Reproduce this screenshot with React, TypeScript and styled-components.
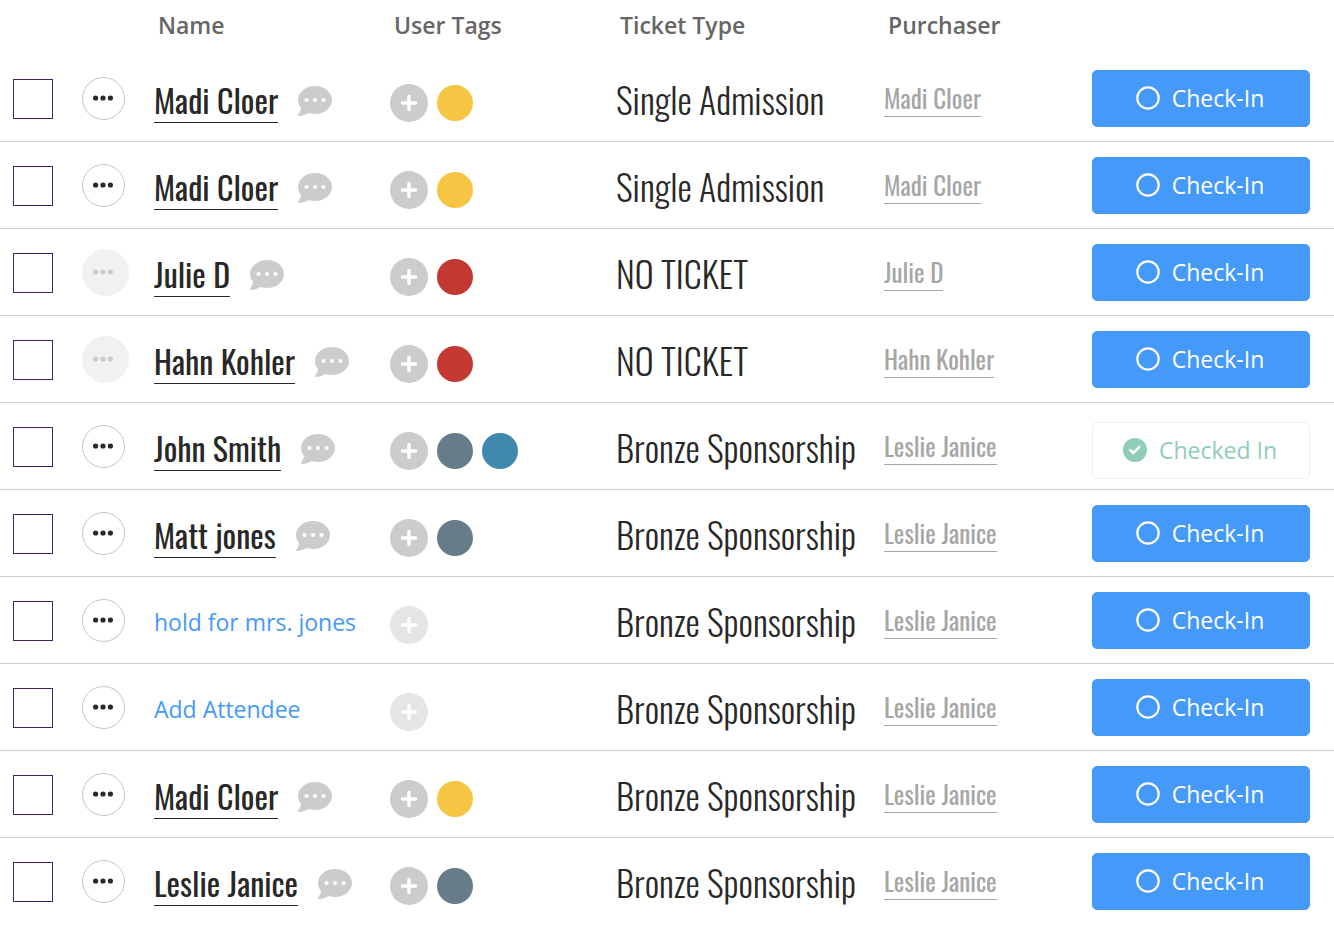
import React from 'react';
import styled, { createGlobalStyle } from 'styled-components';

const display = `Oswald, "Roboto Condensed", "Liberation Sans Narrow", sans-serif`;
const body = `"Open Sans", "Noto Sans", sans-serif`;

const GlobalStyle = createGlobalStyle`
  *, *::before, *::after { box-sizing: border-box; }
  body { margin: 0; background: #fff; color: #282828; font-family: ${body}; }
  button { font-family: inherit; cursor: pointer; }
`;

const AttendeeTable = styled.table`
  width: 100%;
  table-layout: fixed;
  border-collapse: separate;
  border-spacing: 0;
`;

const Column = styled.col<{ $width: number }>`
  width: ${(p) => p.$width}px;
`;

const HeadCell = styled.th`
  height: 55px;
  padding: 9px 0 0 4px;
  vertical-align: top;
  text-align: left;
  font-size: 23px;
  line-height: 32px;
  font-weight: 600;
  color: #666;
`;

const Row = styled.tr`
  height: 87px;
  &:not(:last-child) > td { border-bottom: 1px solid #ccc; }
`;

const Cell = styled.td<{ $top: number }>`
  padding: ${(p) => p.$top}px 0 0;
  vertical-align: top;
  white-space: nowrap;
`;

const Checkbox = styled.input`
  appearance: none;
  display: block;
  width: 40px;
  height: 40px;
  margin: 0 0 0 13px;
  border: 1px solid #45206b;
  background: #fff;
  &:checked { background: #45206b; }
`;

const MenuButton = styled.button`
  display: flex;
  align-items: center;
  justify-content: center;
  width: 43px;
  height: 43px;
  padding: 0 1px 1px 0;
  border: 1px solid #c4c4c4;
  border-radius: 50%;
  background: #fff;
  color: #282828;
  &:disabled {
    width: 47px;
    height: 47px;
    padding-right: 5px;
    border: 0;
    background: #f1f1f1;
    color: #ccc;
  }
`;

const NameLine = styled.div`
  display: flex;
  align-items: center;
  gap: 20px;
`;

const NameLink = styled.a`
  border-bottom: 1px solid currentColor;
  font-family: ${display};
  font-size: 32px;
  line-height: 44px;
  font-weight: 400;
  color: #282828;
  text-decoration: none;
`;

const HoldLink = styled.a`
  font-size: 23px;
  line-height: 44px;
  color: #4599f8;
  text-decoration: none;
`;

const NoteButton = styled.button`
  display: flex;
  padding: 0;
  border: 0;
  background: none;
  color: #ccc;
`;

const Tags = styled.div`
  display: flex;
  align-items: center;
  gap: 9px;
`;

const AddTag = styled.button`
  display: flex;
  align-items: center;
  justify-content: center;
  width: 38px;
  height: 38px;
  padding: 0;
  border: 0;
  border-radius: 50%;
  background: #ccc;
  color: #fff;
  &:disabled { background: #e5e5e5; }
`;

const Tag = styled.span<{ $color: string }>`
  width: 36px;
  height: 36px;
  border-radius: 50%;
  background: ${(p) => p.$color};
`;

const Ticket = styled.span`
  font-family: ${display};
  font-size: 36px;
  line-height: 48px;
  font-weight: 300;
`;

const PurchaserLink = styled.a`
  display: inline-block;
  border-bottom: 1px solid currentColor;
  font-family: ${display};
  font-size: 25px;
  line-height: 36px;
  font-weight: 400;
  color: #a6a6a6;
  text-decoration: none;
`;

const CheckButton = styled.button<{ $done?: boolean }>`
  display: flex;
  align-items: center;
  justify-content: center;
  gap: 12px;
  width: 218px;
  height: 57px;
  margin-top: ${(p) => (p.$done ? 4 : 0)}px;
  padding: 0 2px 2px 0;
  border: 1px solid ${(p) => (p.$done ? '#eee' : '#4599f8')};
  border-radius: 5px;
  background: ${(p) => (p.$done ? '#fff' : '#4599f8')};
  color: ${(p) => (p.$done ? '#8fcdb8' : '#fff')};
  font-size: 23px;
  line-height: 32px;
`;

const Dots = () => (
  <svg width="20" height="6" viewBox="0 0 20 6" fill="currentColor" aria-hidden="true">
    <circle cx="2.6" cy="3" r="2.6" />
    <circle cx="10" cy="3" r="2.6" />
    <circle cx="17.4" cy="3" r="2.6" />
  </svg>
);

const Bubble = () => (
  <svg width="34" height="30" viewBox="0 0 34 30" aria-hidden="true">
    <path
      fill="currentColor"
      d="M17 0C7.600 0 0 6.200 0 14c0 2.900 1.100 5.600 3 7.800-.3 2.700-1.300 4.800-2.800 6.800-.4.700 0 1.400.8 1.400 3.700-.2 7-1.400 9.500-3.100 2 .7 4.200 1.100 6.500 1.100 9.400 0 17-6.200 17-14S26.400 0 17 0z"
    />
    <circle cx="8.500" cy="14" r="2.100" fill="#fff" />
    <circle cx="17" cy="14" r="2.100" fill="#fff" />
    <circle cx="25.500" cy="14" r="2.100" fill="#fff" />
  </svg>
);

const Plus = () => (
  <svg width="18" height="18" viewBox="0 0 18 18" stroke="currentColor" strokeWidth="3.400" strokeLinecap="round" aria-hidden="true">
    <path d="M9 2.500v13M2.500 9h13" />
  </svg>
);

const Ring = () => (
  <svg width="24" height="24" viewBox="0 0 24 24" fill="none" stroke="currentColor" strokeWidth="2.200" aria-hidden="true">
    <circle cx="12" cy="12" r="10.700" />
  </svg>
);

const CheckMark = () => (
  <svg width="24" height="24" viewBox="0 0 24 24" aria-hidden="true">
    <circle cx="12" cy="12" r="12" fill="currentColor" />
    <path d="M7.200 12l3 3 6.200-6.200" fill="none" stroke="#fff" strokeWidth="2.400" strokeLinecap="round" />
  </svg>
);

const yellow = '#f6c544';
const red = '#c43832';
const slate = '#667c89';
const blue = '#3f89af';

interface Attendee {
  name: string;
  ticket: string;
  purchaser: string;
  tags: string[];
  unassigned?: boolean;
  locked?: boolean;
  checkedIn?: boolean;
}

const attendees: Attendee[] = [
  { name: 'Madi Cloer', ticket: 'Single Admission', purchaser: 'Madi Cloer', tags: [yellow] },
  { name: 'Madi Cloer', ticket: 'Single Admission', purchaser: 'Madi Cloer', tags: [yellow] },
  { name: 'Julie D', ticket: 'NO TICKET', purchaser: 'Julie D', tags: [red], locked: true },
  { name: 'Hahn Kohler', ticket: 'NO TICKET', purchaser: 'Hahn Kohler', tags: [red], locked: true },
  { name: 'John Smith', ticket: 'Bronze Sponsorship', purchaser: 'Leslie Janice', tags: [slate, blue], checkedIn: true },
  { name: 'Matt jones', ticket: 'Bronze Sponsorship', purchaser: 'Leslie Janice', tags: [slate] },
  { name: 'hold for mrs. jones', ticket: 'Bronze Sponsorship', purchaser: 'Leslie Janice', tags: [], unassigned: true },
  { name: 'Add Attendee', ticket: 'Bronze Sponsorship', purchaser: 'Leslie Janice', tags: [], unassigned: true },
  { name: 'Madi Cloer', ticket: 'Bronze Sponsorship', purchaser: 'Leslie Janice', tags: [yellow] },
  { name: 'Leslie Janice', ticket: 'Bronze Sponsorship', purchaser: 'Leslie Janice', tags: [slate] },
];

const columnWidths = [82, 72, 236, 226, 268, 208, 242];

const AttendeeRow = ({ name, ticket, purchaser, tags, unassigned, locked, checkedIn }: Attendee) => (
  <Row>
    <Cell $top={24}>
      <Checkbox type="checkbox" aria-label={`Select ${name}`} />
    </Cell>
    <Cell $top={locked ? 20 : 22}>
      <MenuButton type="button" disabled={locked} aria-label={`Actions for ${name}`}>
        <Dots />
      </MenuButton>
    </Cell>
    <Cell $top={23}>
      <NameLine>
        {unassigned ? <HoldLink href="#">{name}</HoldLink> : <NameLink href="#">{name}</NameLink>}
        {!unassigned && (
          <NoteButton type="button" aria-label={`Notes for ${name}`}>
            <Bubble />
          </NoteButton>
        )}
      </NameLine>
    </Cell>
    <Cell $top={29}>
      <Tags>
        <AddTag type="button" disabled={unassigned} aria-label={`Add tag to ${name}`}>
          <Plus />
        </AddTag>
        {tags.map((color) => (
          <Tag key={color} $color={color} />
        ))}
      </Tags>
    </Cell>
    <Cell $top={20}>
      <Ticket>{ticket}</Ticket>
    </Cell>
    <Cell $top={25}>
      <PurchaserLink href="#">{purchaser}</PurchaserLink>
    </Cell>
    <Cell $top={15}>
      <CheckButton type="button" $done={checkedIn}>
        {checkedIn ? <CheckMark /> : <Ring />}
        {checkedIn ? 'Checked In' : 'Check-In'}
      </CheckButton>
    </Cell>
  </Row>
);

export default function App() {
  return (
    <>
      <GlobalStyle />
      <AttendeeTable>
        <colgroup>
          {columnWidths.map((width, i) => (
            <Column key={i} $width={width} />
          ))}
        </colgroup>
        <thead>
          <tr>
            <HeadCell as="td" />
            <HeadCell as="td" />
            <HeadCell scope="col">Name</HeadCell>
            <HeadCell scope="col">User Tags</HeadCell>
            <HeadCell scope="col">Ticket Type</HeadCell>
            <HeadCell scope="col">Purchaser</HeadCell>
            <HeadCell as="td" />
          </tr>
        </thead>
        <tbody>
          {attendees.map((attendee, i) => (
            <AttendeeRow key={i} {...attendee} />
          ))}
        </tbody>
      </AttendeeTable>
    </>
  );
}
